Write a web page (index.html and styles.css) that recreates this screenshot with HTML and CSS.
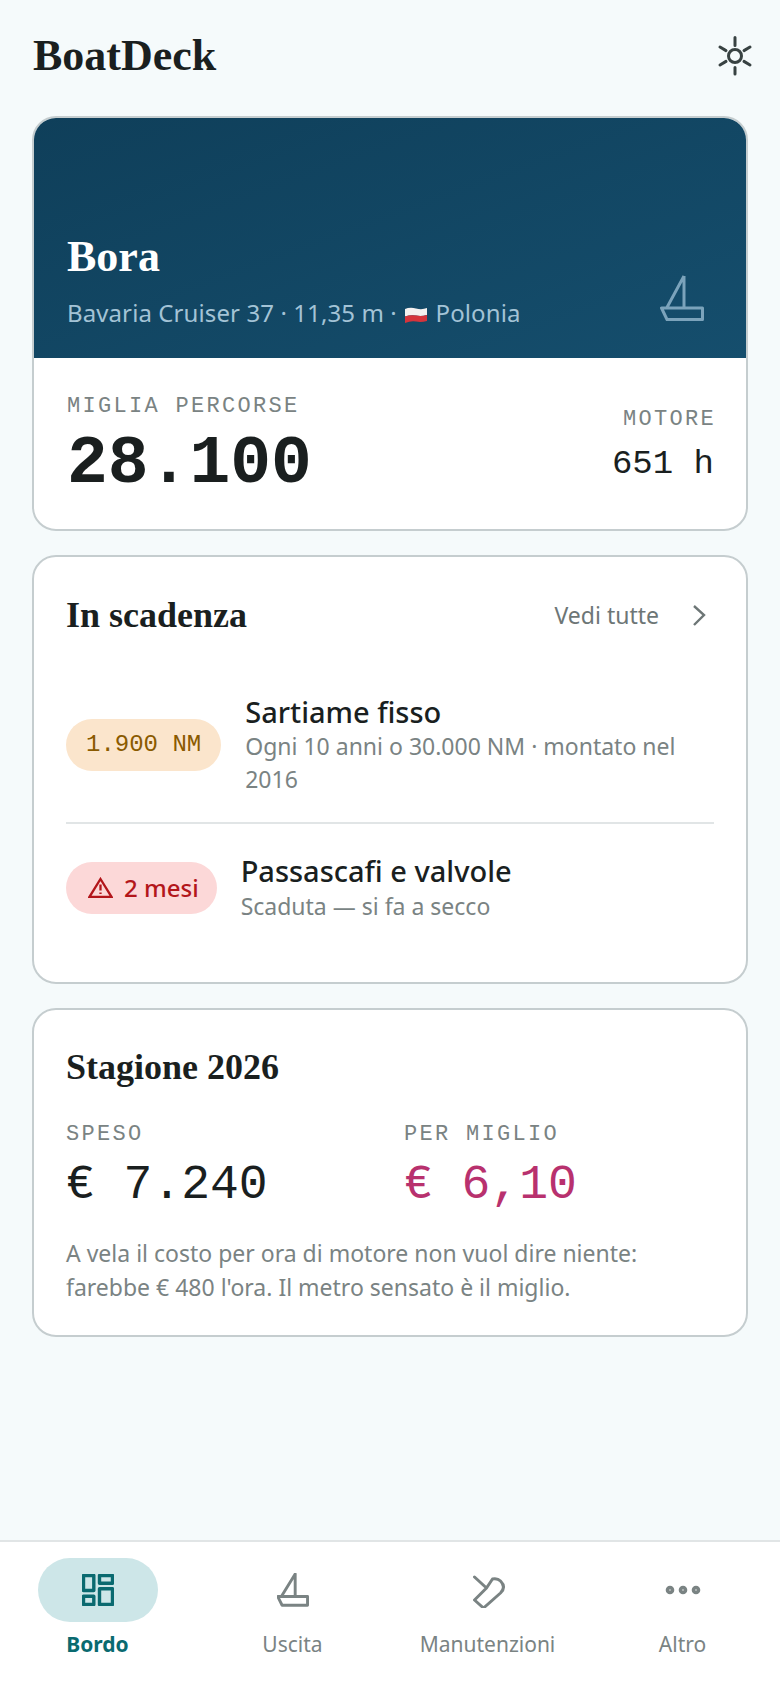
FILE: index.html
```html
<!DOCTYPE html>
<html lang="it">
<head>
<meta charset="utf-8">
<title>BoatDeck</title>
<link rel="stylesheet" href="styles.css">
</head>
<body>
<div class="app">
  <main class="content">
    <header class="topbar">
      <h1 class="brand">BoatDeck</h1>
      <svg class="sun" viewBox="0 0 40 40" aria-label="Tema"><circle cx="20" cy="20" r="6.5"/><path d="M20 1.500V9.500M20 31.500V38M5 11l6 3.600M35 11l-6 3.600M5 29l6-3.600M35 29l-6-3.600"/></svg>
    </header>

    <section class="card">
      <div class="hero">
        <div class="hero-text">
          <h2 class="boat-name">Bora</h2>
          <p class="boat-meta">Bavaria Cruiser 37 · 11,35 m · <svg class="flag" viewBox="0 0 22 16"><path d="M0 2Q5 0 11 1.5T22 1V8Q16 9.500 11 8.500T0 9.500Z" fill="#f4f1f0"/><path d="M0 9.500Q5 7.500 11 8.500T22 8V14Q16 15.500 11 14.500T0 16Z" fill="#d6343c"/></svg> Polonia</p>
        </div>
        <svg class="hero-boat" viewBox="0 0 44 46"><path d="M24 1V33M24 1 6.700 33M1.500 33H42.500V44.500H7Z"/></svg>
      </div>
      <div class="stats">
        <div>
          <div class="label">MIGLIA PERCORSE</div>
          <div class="miles">28.100</div>
        </div>
        <div class="engine">
          <div class="label">MOTORE</div>
          <div class="hours">651 h</div>
        </div>
      </div>
    </section>

    <section class="card due">
      <div class="due-head">
        <h2 class="section-title">In scadenza</h2>
        <div class="see-all"><span>Vedi tutte</span><svg class="chevron" viewBox="0 0 14 22"><path d="M2 2 12 11 2 21"/></svg></div>
      </div>
      <div class="due-row">
        <span class="pill pill-amber">1.900 NM</span>
        <div class="due-text">
          <div class="due-title">Sartiame fisso</div>
          <div class="due-sub">Ogni 10 anni o 30.000 NM · montato nel 2016</div>
        </div>
      </div>
      <div class="due-row due-row-last">
        <span class="pill pill-red"><svg class="warn" viewBox="0 0 25 21"><path d="M12.500 2 23.500 19.800H1.500Z M12.500 7.500V13.500M12.500 15.500V17"/></svg>2 mesi</span>
        <div class="due-text">
          <div class="due-title">Passascafi e valvole</div>
          <div class="due-sub">Scaduta — si fa a secco</div>
        </div>
      </div>
    </section>

    <section class="card season">
      <h2 class="section-title">Stagione 2026</h2>
      <div class="season-grid">
        <div>
          <div class="label">SPESO</div>
          <div class="amount">€ 7.240</div>
        </div>
        <div>
          <div class="label">PER MIGLIO</div>
          <div class="amount amount-accent">€ 6,10</div>
        </div>
      </div>
      <p class="note">A vela il costo per ora di motore non vuol dire niente: farebbe € 480 l'ora. Il metro sensato è il miglio.</p>
    </section>
  </main>

  <nav class="tabbar">
    <div class="tab tab-active">
      <span class="tab-icon"><svg class="ic" viewBox="0 0 32 32"><path d="M1.500 1.500H11.800V16.500H1.500ZM1.500 22.200H11.800V30.500H1.500ZM17.500 1.500H30.500V9.200H17.500ZM17.500 14.800H30.500V30.500H17.500Z"/></svg></span>
      <span class="tab-label">Bordo</span>
    </div>
    <div class="tab">
      <span class="tab-icon"><svg class="ic" viewBox="1 0 44 46"><path d="M26 1V32M26 1 7 32M2 32H43V44H8Z"/></svg></span>
      <span class="tab-label">Uscita</span>
    </div>
    <div class="tab">
      <span class="tab-icon"><svg class="ic ic-wide" viewBox="28.500 27 38 36"><path d="M34 32 46 43M46 43 34 55 43 63 60 48Q66 42 60 36 57 33 52 34Z"/></svg></span>
      <span class="tab-label">Manutenzioni</span>
    </div>
    <div class="tab">
      <span class="tab-icon"><svg class="ic ic-wide ic-dots" viewBox="0 0 38 10"><circle cx="6" cy="5" r="2.500"/><circle cx="19" cy="5" r="2.500"/><circle cx="32" cy="5" r="2.500"/></svg></span>
      <span class="tab-label">Altro</span>
    </div>
  </nav>
</div>
</body>
</html>
```

FILE: styles.css
```css
* { box-sizing: border-box; }
html, body { margin: 0; padding: 0; }
body {
  background: #f5fafb;
  color: #1a1f1f;
  font-family: "Noto Sans", sans-serif;
}
h1, h2, p { margin: 0; font-weight: inherit; }
.app { height: 1688px; display: flex; flex-direction: column; }
.content { flex: 1; padding: 0 32px; display: flex; flex-direction: column; gap: 24px; }

.topbar { height: 116px; margin-bottom: -24px; padding: 0 0 5px 1px; display: flex; justify-content: space-between; align-items: center; }
.brand { font-family: "Liberation Serif", serif; font-weight: 700; font-size: 44px; line-height: 1; color: #1a1f1f; }
.sun { width: 40px; height: 40px; margin-right: -7px; fill: none; stroke: #384242; stroke-width: 3; stroke-linecap: round; }

.card { background: #fff; border: 2px solid #c5cdcf; border-radius: 24px; overflow: hidden; }

.hero {
  height: 240px;
  padding: 0 42px 29px 33px;
  display: flex; justify-content: space-between; align-items: flex-end;
  background: linear-gradient(160deg, #0f3f5a, #154e6d);
}
.boat-name { font-family: "Liberation Serif", serif; font-weight: 700; font-size: 44px; line-height: 1; color: #fff; margin-bottom: 18px; }
.boat-meta { font-size: 24px; line-height: 32px; letter-spacing: 0.1px; color: #a3c3d6; }
.flag { width: 22px; height: 16px; vertical-align: -1px; margin: 0 2px; }
.hero-boat { width: 44px; height: 46px; fill: none; stroke: #7ba3bb; stroke-width: 3; stroke-linejoin: round; margin-bottom: 8px; }

.stats { padding: 36px 32px 29px 33px; display: flex; justify-content: space-between; align-items: flex-end; }
.label { font-family: "Liberation Mono", monospace; font-size: 22px; line-height: 26px; letter-spacing: 2.3px; color: #7a8383; }
.miles { font-family: "Liberation Mono", monospace; font-size: 68px; line-height: 72px; margin-top: 8px; font-weight: 700; color: #1a1f1f; }
.engine { text-align: right; padding-bottom: 12px; }
.engine .label { margin-right: -2px; }
.hours { font-family: "Liberation Mono", monospace; font-size: 34px; line-height: 48px; margin-top: 7px; color: #1a1f1f; }

.due { padding: 0 32px 36px; }
.due-head { height: 116px; display: flex; justify-content: space-between; align-items: center; }
.section-title { font-family: "Liberation Serif", serif; font-weight: 700; font-size: 36px; line-height: 40px; color: #1a1f1f; }
.see-all { display: flex; align-items: center; gap: 33px; padding-right: 8px; font-size: 23px; color: #6d7676; }
.chevron { width: 14px; height: 22px; fill: none; stroke: #6d7676; stroke-width: 2.4; }

.due-row { display: flex; align-items: center; gap: 24px; padding: 20px 0 26px; border-bottom: 2px solid #e1e5e6; }
.due-row-last { border-bottom: 0; padding: 28px 0 23px; }
.pill { display: inline-flex; align-items: center; height: 52px; padding: 0 20px; border-radius: 26px; font-size: 24px; font-weight: 500; white-space: nowrap; flex: none; }
.pill-amber { background: #fbe5cc; color: #8a5a00; font-family: "Liberation Mono", monospace; font-weight: 400; }
.pill-red { background: #fcd8d8; color: #b3161b; gap: 11px; padding: 0 18px 0 22px; }
.warn { width: 25px; height: 21px; fill: none; stroke: #b3161b; stroke-width: 2.300; }
.due-title { font-size: 29px; line-height: 37px; font-weight: 500; color: #1a1f1f; }
.due-row-last .due-sub { margin-top: 1px; }
.due-sub { font-size: 23px; line-height: 33px; color: #7a8383; }

.season { padding: 37px 32px 31px; }
.season-grid { display: grid; grid-template-columns: 338px 1fr; margin-top: 35px; }
.amount { font-family: "Liberation Mono", monospace; font-size: 48px; line-height: 56px; margin-top: 9px; color: #1a1f1f; }
.amount-accent { color: #b8316e; }
.note { margin-top: 23px; font-size: 23px; line-height: 34px; color: #7a8383; }

.tabbar { height: 148px; background: #fff; border-top: 2px solid #e1e5e6; display: grid; grid-template-columns: repeat(4, 1fr); }
.tab { display: flex; flex-direction: column; align-items: center; padding-top: 16px; color: #7a8383; }
.tab-icon { width: 120px; height: 64px; border-radius: 32px; display: flex; align-items: center; justify-content: center; }
.tab-active .tab-icon { background: #cde6e8; }
.tab-label { font-size: 21px; line-height: 28px; margin-top: 8px; }
.tab-active .tab-label { font-weight: 700; color: #0a6a70; }
.ic { width: 32px; height: 34px; fill: none; stroke: #7a8383; stroke-width: 4; stroke-linejoin: round; stroke-linecap: round; }
.tab-active .ic { height: 32px; stroke: #0a6a70; stroke-width: 3.4; }
.ic-wide { width: 38px; height: 36px; stroke-width: 3; }
.ic-dots { stroke-width: 3.6; }
```
